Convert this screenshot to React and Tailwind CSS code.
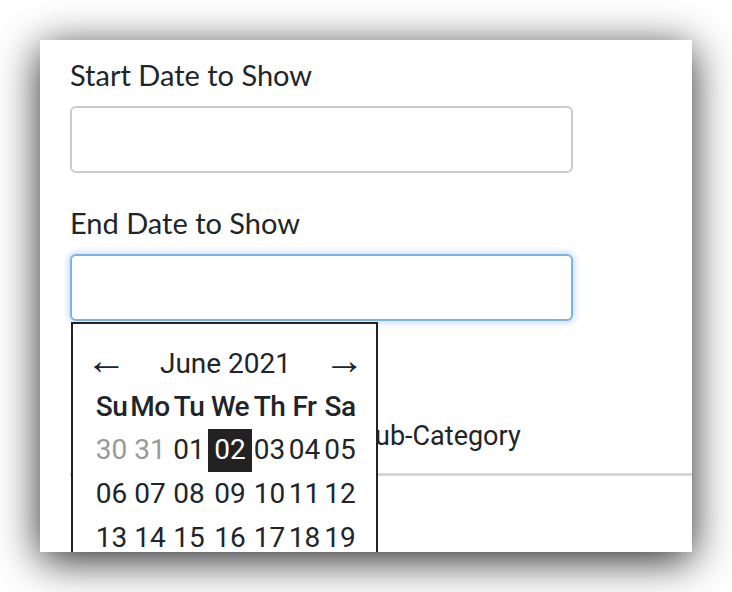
import React from 'react';

const weekDays = [
    { label: 'Su', w: 'w-[37px]' },
    { label: 'Mo', w: 'w-[40px]' },
    { label: 'Tu', w: 'w-[38px]' },
    { label: 'We', w: 'w-[44px]' },
    { label: 'Th', w: 'w-[35px]' },
    { label: 'Fr', w: 'w-[35px]' },
    { label: 'Sa', w: 'w-[36px]' },
];

const weeks = [
    ['30', '31', '01', '02', '03', '04', '05'],
    ['06', '07', '08', '09', '10', '11', '12'],
    ['13', '14', '15', '16', '17', '18', '19'],
    ['20', '21', '22', '23', '24', '25', '26'],
];

function Calendar() {
    return (
        <div className="absolute left-[1px] top-[68px] z-10 w-[307px] border-2 border-[#222] bg-white pt-[18px] pb-4 pl-[20px] pr-[18px] font-['Roboto',sans-serif] text-[28px] text-[#212529]">
            <div className="flex h-[44px] items-center justify-between">
                <span className="-ml-[7px] -mt-[8px] font-['Liberation_Sans',sans-serif] text-[41px] leading-none">←</span>
                <span>June 2021</span>
                <span className="-mr-[7px] -mt-[8px] font-['Liberation_Sans',sans-serif] text-[41px] leading-none">→</span>
            </div>
            <div className="flex h-[42px] items-center font-medium tracking-[-0.5px]">
                {weekDays.map((d) => (
                    <div key={d.label} className={`${d.w} text-center`}>{d.label}</div>
                ))}
            </div>
            {weeks.map((week, i) => (
                <div key={i} className="flex h-[44px] items-center">
                    {week.map((day, j) => {
                        const muted = i === 0 && j < 2;
                        const selected = i === 0 && j === 3;
                        return (
                            <div
                                key={day}
                                className={`${weekDays[j].w} flex h-[43px] items-center justify-center ${
                                    selected ? 'bg-[#222] text-white' : muted ? 'text-[#999]' : ''
                                }`}
                            >
                                {day}
                            </div>
                        );
                    })}
                </div>
            ))}
        </div>
    );
}

export default function App() {
    return (
        <div className="min-h-[592px] bg-white p-[40px]">
            <div className="h-[512px] w-full overflow-hidden bg-white shadow-[0_8px_40px_rgba(0,0,0,0.85)]">
                <div className="pl-[30px] pt-[17px] text-[#212529]">
                    <label className="block font-['Lato',sans-serif] text-[29px] leading-[36px]">Start Date to Show</label>
                    <input
                        type="text"
                        className="mt-[13px] block h-[67px] w-[503px] rounded-[6px] border-2 border-[#cbcbcb] bg-white outline-none"
                    />
                    <label className="mt-[32px] block font-['Lato',sans-serif] text-[29px] leading-[36px]">End Date to Show</label>
                    <div className="relative mt-[13px]">
                        <input
                            type="text"
                            className="block h-[67px] w-[503px] rounded-[6px] border-2 border-[#7fb3e6] bg-white shadow-[0_0_6px_2px_rgba(100,160,230,0.35)] outline-none"
                        />
                        <Calendar />
                    </div>
                    <div className="mt-[99px] pl-[289px] font-['Roboto',sans-serif] text-[27px] leading-[32px]">
                        Sub-Category
                    </div>
                </div>
                <div className="ml-[30px] mt-[21px] h-[3px] bg-[#d6d6d6]" />
            </div>
        </div>
    );
}
